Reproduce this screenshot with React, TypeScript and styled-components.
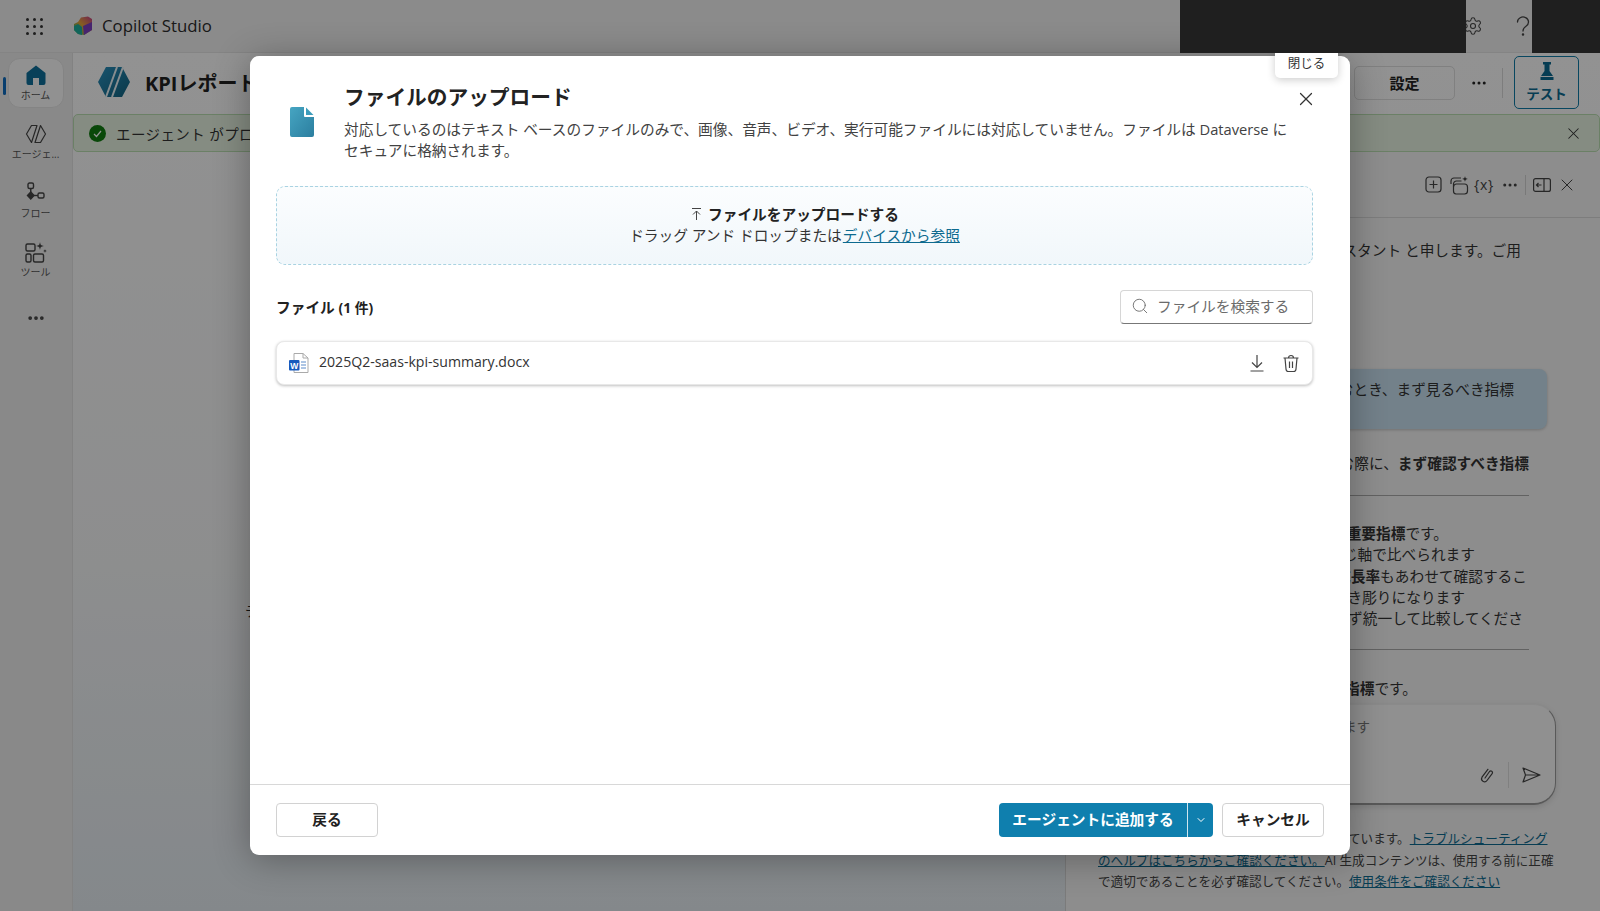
import React from 'react';
import styled, { createGlobalStyle } from 'styled-components';
import { ChevronDown, Search, X, Settings, Ellipsis } from 'lucide-react';

const Global = createGlobalStyle`
  html, body { margin: 0; padding: 0; height: 100%; overflow: hidden; }
  body { font-family: "Open Sans", "Noto Sans CJK JP", sans-serif; color: #242424; background: #fff; }
  * { box-sizing: border-box; }
`;
const Page = styled.div`position: relative; width: 1600px; height: 911px; overflow: hidden; display: flex; flex-direction: column; background: #f3f3f3;`;
const TopBar = styled.header`height: 53px; flex: none; display: flex; align-items: center; padding-left: 26px; background: #f0f0f0; border-bottom: 1px solid #e3e3e3;`;
const Waffle = styled.div`width: 18px; display: grid; grid-template-columns: repeat(3, 3px); gap: 4px; margin-right: 29px;`;
const Dot = styled.span`width: 3px; height: 3px; border-radius: 50%; background: #333;`;
const Brand = styled.span`font-size: 16.8px; margin: 0 0 1px 9px; color: #2b2b2b;`;
const TopIcons = styled.div`margin-left: auto; display: flex; align-items: center; gap: 33px; padding-right: 70px; color: #444;`;
const Redaction = styled.div<{ $left: number; $width: number }>`position: absolute; z-index: 30; top: 0; height: 53px; left: ${p => p.$left}px; width: ${p => p.$width}px; background: #1f1f1f;`;
const Body = styled.div`flex: 1; display: flex; min-height: 0;`;
const Rail = styled.nav`width: 73px; flex: none; display: flex; flex-direction: column; align-items: center; padding: 5px 1px 0 0; background: #ececec; border-right: 1px solid #e0e0e0; position: relative;`;
const RailIndicator = styled.span`position: absolute; left: 3px; top: 24px; width: 3px; height: 18px; border-radius: 2px; background: #0f6cbd;`;
const RailItem = styled.div<{ $active?: boolean }>`width: 56px; height: 50px; display: flex; flex-direction: column; align-items: center; justify-content: center; gap: 1px; font-size: 10px; color: #555; border-radius: 12px; margin-bottom: 9px; ${p => p.$active && 'background: #fafafa; border: 1px solid #e4e4e4;'}`;
const More = styled.div`margin-top: 14px; color: #444;`;
const Main = styled.main`flex: 1; min-width: 0; display: flex; flex-direction: column; background: linear-gradient(180deg, #fbfbfb 0%, #f3f4f5 60%, #e4ebf0 100%);`;
const AgentBar = styled.div`height: 61px; flex: none; display: flex; align-items: center; padding: 0 0 4px 24px;`;
const AgentName = styled.h1`font-size: 20px; font-weight: 700; margin: 2px 0 0 14px; color: #222;`;
const AgentActions = styled.div`margin-left: auto; display: flex; align-items: center; padding-right: 21px; margin-top: 2px;`;
const GhostButton = styled.div`width: 101px; height: 34px; display: flex; align-items: center; justify-content: center; font-size: 15px; font-weight: 700; border: 1px solid #dcdcdc; border-radius: 5px; color: #222; margin-right: 15px;`;
const Divider = styled.span`width: 1px; height: 30px; background: #d8d8d8; margin: 0 11px 0 14px;`;
const TestButton = styled.div`width: 65px; height: 53px; display: flex; flex-direction: column; align-items: center; justify-content: center; gap: 3px; font-size: 13.5px; font-weight: 700; color: #0d6a8f; border: 1.5px solid #0f7ba6; border-radius: 5px; margin-top: -1px;`;
const Banner = styled.div`height: 38px; flex: none; display: flex; align-items: center; padding: 0 16px 0 15px; font-size: 14.5px; letter-spacing: .4px; color: #333; background: #e6f2e1; border: 1px solid #b9dcb0; border-radius: 5px;`;
const BannerCheck = styled.span`width: 17px; height: 17px; flex: none; border-radius: 50%; background: #107c10; display: flex; align-items: center; justify-content: center; margin-right: 10px;`;
const BannerClose = styled.span`margin-left: auto; display: flex; color: #333;`;
const Content = styled.div`flex: 1; min-height: 0; display: flex;`;
const Canvas = styled.div`flex: 1; min-width: 0; display: flex; align-items: center; padding: 156px 0 0 172px; font-size: 14px; color: #222;`;
const TestPanel = styled.aside`width: 535px; flex: none; display: flex; flex-direction: column; border-left: 1px solid #d4d4d4; background: #f3f3f3;`;
const PanelHead = styled.div`height: 66px; flex: none; display: flex; align-items: center; justify-content: flex-end; gap: 5.5px; padding: 0 23px 0 0; border-bottom: 1px solid #d8d8d8; color: #444;`;
const HeadSlot = styled.span`width: 20px; display: flex; align-items: center; justify-content: center; font-size: 14px; letter-spacing: .8px; white-space: nowrap; color: #444;`;
const HeadRule = styled.span`width: 1px; height: 20px; background: #d0d0d0;`;
const Chat = styled.div`flex: 1; min-height: 0; padding: 22px 0 0 32px; font-size: 14.7px; color: #333; display: flex; flex-direction: column;`;
const Line = styled.div<{ $end: number }>`white-space: nowrap; line-height: 21.2px; text-align: right; overflow: visible; padding-right: ${p => p.$end}px;`;
const Bubble = styled.div`width: 449px; height: 60px; flex: none; margin-top: 108px; padding: 8px 33px 0 0; text-align: right; white-space: nowrap; line-height: 24px; background: #c6dfee; border-radius: 8px; box-shadow: 0 1px 3px rgba(0,0,0,.2);`;
const Lead = styled.div`white-space: nowrap; text-align: right; padding-right: 71px; margin-top: 22px; line-height: 24px;`;
const Rule = styled.hr<{ $gap: number; $top: number }>`width: 431px; flex: none; margin: ${p => p.$top}px 0 ${p => p.$gap}px 0; border: 0; border-top: 1px solid #aaa;`;
const InputBox = styled.div`width: 458px; height: 101px; flex: none; margin-top: 5px; background: #f8f8f8; border-radius: 22px; border: 1px solid #eee; border-bottom: 2px solid #999; border-right: 1.5px solid #999; display: flex; flex-direction: column; padding: 12px 185px 0 0; text-align: right; line-height: 20px; font-size: 13.5px; color: #777; box-shadow: 0 2px 6px rgba(0,0,0,.12); position: relative;`;
const InputTools = styled.div`position: absolute; right: 14px; bottom: 15px; display: flex; align-items: center; gap: 12px; color: #444;`;
const ToolRule = styled.span`width: 1px; height: 26px; background: #ddd;`;
const Legal = styled.div`margin-top: 23px; font-size: 12.6px; line-height: 21.3px; color: #444; white-space: nowrap;`;
const LegalLink = styled.a`color: #0d6a8f; text-decoration: underline;`;

const Overlay = styled.div`position: absolute; inset: 0; z-index: 10; display: flex; align-items: center; justify-content: center; background: rgba(0,0,0,.42);`;
const Modal = styled.section`position: relative; width: 1100px; height: 799px; display: flex; flex-direction: column; background: #fff; border-radius: 9px; box-shadow: 0 4px 36px rgba(0,0,0,.32);`;
const Tooltip = styled.div`position: absolute; top: -9px; left: 1025px; width: 63px; height: 31px; padding-top: 6px; text-align: center; font-size: 12.5px; color: #333; background: #fff; border-radius: 5px; box-shadow: 0 2px 8px rgba(0,0,0,.2);`;
const CloseBtn = styled.button`position: absolute; top: 32px; right: 33px; width: 22px; height: 22px; padding: 0; border: 0; background: none; color: #333; display: flex;`;
const ModalBody = styled.div`flex: 1; min-height: 0; display: flex; flex-direction: column; padding: 27px 37px 0 26px;`;
const Head = styled.div`display: flex; align-items: flex-start;`;
const DocIconWrap = styled.div`width: 68px; flex: none; padding: 24px 0 0 14px;`;
const HeadText = styled.div`flex: 1; min-width: 0; padding-right: 24px;`;
const Title = styled.h2`margin: 0; font-size: 20.7px; line-height: 28px; font-weight: 700; color: #222;`;
const Desc = styled.p`margin: 8px 0 0; font-size: 14.7px; line-height: 20.8px; color: #424242;`;
const DropZone = styled.div`height: 79px; flex: none; margin-top: 25px; padding-bottom: 1px; display: flex; flex-direction: column; align-items: center; justify-content: center; font-size: 14.7px; line-height: 21px; color: #333; border: 1px dashed #a9d3e2; border-radius: 9px; background: linear-gradient(180deg, #fbfdfe 0%, #f1f7fb 100%);`;
const UploadLine = styled.div`display: flex; align-items: center; gap: 5px; font-weight: 700; color: #222;`;
const BrowseLink = styled.a`color: #0d6a8f; text-decoration: underline; margin-left: 1px;`;
const ListHead = styled.div`margin-top: 25px; display: flex; align-items: center; justify-content: space-between; height: 34px;`;
const ListTitle = styled.div`font-size: 14.7px; font-weight: 700; color: #222; padding-bottom: 1px;`;
const ListCount = styled.span`font-size: 13.8px;`;
const SearchBox = styled.div`width: 193px; height: 34px; display: flex; align-items: center; gap: 8px; padding: 0 0 2px 10px; font-size: 14.7px; color: #6b6b6b; border: 1px solid #d6d6d6; border-bottom: 1px solid #777; border-radius: 4px;`;
const FileRow = styled.div`margin-top: 17px; height: 44px; display: flex; align-items: center; padding: 0 11px 0 12px; background: #fff; border-radius: 8px; border: 1px solid #e8e8e8; box-shadow: 0 1px 3px rgba(0,0,0,.25);`;
const FileName = styled.span`margin: 0 0 3px 10px; font-size: 14.1px; color: #333;`;
const RowActions = styled.div`margin-left: auto; display: flex; align-items: center; gap: 14px; color: #444;`;
const Footer = styled.footer`height: 71px; flex: none; display: flex; align-items: center; padding: 0 26px; border-top: 1px solid #d8d8d8;`;
const BaseButton = styled.button`height: 34px; padding: 0 0 3px; font-family: inherit; font-size: 14.7px; font-weight: 700; color: #222; background: #fff; border: 1px solid #d2d2d2; border-radius: 4px;`;
const BackButton = styled(BaseButton)`width: 102px;`;
const Split = styled.div`margin-left: auto; display: flex; height: 34px; color: #fff;`;
const Primary = styled.div`width: 188px; padding-bottom: 3px; display: flex; align-items: center; justify-content: center; font-size: 14.7px; font-weight: 700; background: #0f7fae; border-radius: 4px 0 0 4px;`;
const Caret = styled.div`width: 26px; display: flex; align-items: center; justify-content: center; background: #0f7fae; border-left: 1px solid #cfe6ef; border-radius: 0 4px 4px 0;`;
const CancelButton = styled(BaseButton)`width: 102px; margin-left: 9px;`;

const CopilotLogo = () => (
  <svg width="20" height="20" viewBox="0 0 20 20">
    <defs>
      <linearGradient id="cg1" x1="0" y1="1" x2="1" y2="0"><stop offset="0" stopColor="#1fb36b" /><stop offset=".5" stopColor="#e8a33a" /><stop offset="1" stopColor="#c23a8a" /></linearGradient>
    </defs>
    <path d="M8 1.500 15 .5 19 3V14L11 19 5 18 1 14V8L5 6Z" fill="url(#cg1)" />
    <path d="M1 10 5 8 9 11V19L5 18 1 14Z" fill="#1eaf9c" />
    <path d="M10 10 19 6V14L11 19Z" fill="#7a3fc0" />
  </svg>
);
const AgentLogo = () => (
  <svg width="34" height="32" viewBox="0 0 34 32">
    <defs><linearGradient id="ag" x1="0" y1="0" x2="1" y2="1"><stop offset="0" stopColor="#2a90bd" /><stop offset="1" stopColor="#12627f" /></linearGradient></defs>
    <path d="M9 1H25L33 16 25 31H9L1 16Z" fill="url(#ag)" />
    <path d="M20 1 9 31M26 1 15 31" stroke="#e9f3f7" strokeWidth="2" fill="none" />
  </svg>
);
const HomeIcon = () => (
  <svg width="22" height="22" viewBox="0 0 22 22"><path d="M11 1.500 20.500 9V19a2 2 0 0 1-2 2H14V14H8V21H3.500a2 2 0 0 1-2-2V9Z" fill="#0f6f9a" /></svg>
);
const AgentIcon = () => (
  <svg width="22" height="22" viewBox="0 0 22 22" fill="none" stroke="#444" strokeWidth="1.2" strokeLinejoin="round"><path d="M6.500 2.500H12L6.500 19.500 1.500 11Z" /><path d="M15.500 19.500H10L15.500 2.500 20.500 11Z" /></svg>
);
const FlowIcon = () => (
  <svg width="22" height="22" viewBox="0 0 22 22" fill="none" stroke="#444" strokeWidth="1.4"><rect x="3" y="1" width="5.500" height="5.500" rx="1.500" /><path d="M5.750 6.500V10" /><path d="M5.750 10 9 13.500 5.750 17 2.500 13.500Z" fill="#444" /><path d="M9 13.500H13" /><rect x="13" y="11" width="6" height="5" rx="1.500" /></svg>
);
const ToolIcon = () => (
  <svg width="24" height="22" viewBox="0 0 24 22" fill="none" stroke="#444" strokeWidth="1.4"><rect x="2" y="3" width="9" height="7" rx="1.500" /><rect x="2" y="13" width="5" height="8" rx="1.500" /><rect x="9.500" y="13" width="10" height="8" rx="1.500" /><path d="M16 1c.5 3 1 3.500 4 4-3 .5-3.500 1-4 4-.5-3-1-3.500-4-4 3-.5 3.500-1 4-4Z" fill="#444" stroke="none" /><path d="M21 8c.2 1.300.5 1.600 2 2-1.500.3-1.800.6-2 2-.2-1.400-.5-1.700-2-2 1.500-.4 1.800-.7 2-2Z" fill="#444" stroke="none" /></svg>
);
const QuestionIcon = () => (
  <svg width="14" height="20" viewBox="0 0 14 20" fill="none" stroke="#444" strokeWidth="1.300" strokeLinecap="round"><path d="M1.500 6a5.500 5 0 1 1 8.500 4.200C8 11.500 7 12.500 7 15" /><circle cx="7" cy="18.500" r=".6" fill="#444" /></svg>
);
const FlaskIcon = () => (
  <svg width="20" height="18" viewBox="0 0 20 18"><path d="M6 0H14V2.500H12.500V9L16 14H4L7.500 9V2.500H6ZM3.500 15H16.500V18H3.500Z" fill="#0d6a8f" /></svg>
);
const DocIcon = () => (
  <svg width="24" height="30" viewBox="0 0 24 30">
    <defs><linearGradient id="dg" x1="0" y1="0" x2="1" y2="1"><stop offset="0" stopColor="#46a5c2" /><stop offset="1" stopColor="#2b7e9f" /></linearGradient></defs>
    <path d="M2 0H14V9a1 1 0 0 0 1 1H24V28a2 2 0 0 1-2 2H2a2 2 0 0 1-2-2V2a2 2 0 0 1 2-2Z" fill="url(#dg)" />
    <path d="M16 .5 23.500 8H16Z" fill="#3d9cbb" />
  </svg>
);
const WordIcon = () => (
  <svg width="20" height="20" viewBox="0 0 20 20">
    <path d="M5 .5H14L19 5V19.500H5Z" fill="#fff" stroke="#aaa" />
    <path d="M14 .5V5H19" fill="none" stroke="#aaa" />
    <path d="M12 9H17M12 12H17M12 15H17" stroke="#5a8ac9" />
    <rect x="0" y="7" width="10.500" height="10.500" rx="1" fill="#185abd" />
    <text x="5.200" y="15.500" fontSize="8.500" fontWeight="700" fontFamily="Liberation Sans, sans-serif" fill="#fff" textAnchor="middle">W</text>
  </svg>
);
const AddIcon = () => (
  <svg width="17" height="17" viewBox="0 0 17 17" fill="none" stroke="#444" strokeWidth="1.200"><rect x="1" y="1" width="15" height="15" rx="3" /><path d="M8.500 4.500V12.500M4.500 8.500H12.500" /></svg>
);
const MultiIcon = () => (
  <svg width="20" height="20" viewBox="0 0 20 20" fill="none" stroke="#444" strokeWidth="1.200"><path d="M2 9V6a3 3 0 0 1 3-3h7" /><path d="M4.500 12V9a3 3 0 0 1 3-3h5" /><path d="M7 19a3 3 0 0 1-2.500-3V12a3 3 0 0 1 3-3h8a3 3 0 0 1 3 3v4a3 3 0 0 1-3 3Z" /><path d="M16 1c.3 2 .8 2.500 3 3-2.200.4-2.700 1-3 3-.3-2-.8-2.600-3-3 2.200-.5 2.700-1 3-3Z" fill="#444" stroke="none" /></svg>
);
const PanelIcon = () => (
  <svg width="18" height="14" viewBox="0 0 18 14" fill="none" stroke="#444" strokeWidth="1.200"><rect x=".6" y=".6" width="16.800" height="12.800" rx="2" /><path d="M11 .6V13.400" /><path d="M8.500 7H3.500M5.500 5 3.500 7 5.500 9" /></svg>
);
const DownloadIcon = () => (
  <svg width="20" height="20" viewBox="0 0 20 20" fill="none" stroke="#444" strokeWidth="1.200"><path d="M10 2V14M5 9.500 10 14.500 15 9.500M3.500 18H16.500" /></svg>
);
const TrashIcon = () => (
  <svg width="20" height="20" viewBox="0 0 20 20" fill="none" stroke="#444" strokeWidth="1.200"><path d="M2.500 5H17.500M7.500 5a2.500 2.500 0 0 1 5 0" /><path d="M4 5 5 16a2.500 2.500 0 0 0 2.500 2.500h5A2.500 2.500 0 0 0 15 16L16 5" /><path d="M8.500 8.500V15M11.500 8.500V15" /></svg>
);
const UploadIcon = () => (
  <svg width="13" height="14" viewBox="0 0 13 14" fill="none" stroke="#444" strokeWidth="1"><path d="M2 1.500H11M6.500 13V4M3 7.500 6.500 4 10 7.500" /></svg>
);
const ClipIcon = () => (
  <svg width="18" height="18" viewBox="0 0 18 18" fill="none" stroke="#444" strokeWidth="1.200" strokeLinecap="round"><path d="M7 12 11.500 5.500a1.700 1.700 0 0 1 2.800 1.900L9 14.500a3 3 0 0 1-5-3.300L9.500 3.800a3 3 0 0 1 .5-.5" /></svg>
);
const SendIcon = () => (
  <svg width="20" height="18" viewBox="0 0 20 18" fill="none" stroke="#444" strokeWidth="1.200" strokeLinejoin="round"><path d="M2 2 19 9 2 16 4.500 9ZM4.500 9H19" /></svg>
);

export default function App() {
  return (
    <Page>
      <Global />
      <TopBar>
        <Waffle>{Array.from({ length: 9 }).map((_, i) => <Dot key={i} />)}</Waffle>
        <CopilotLogo />
        <Brand>Copilot Studio</Brand>
        <TopIcons><Settings size={20} strokeWidth={1.3} /><QuestionIcon /></TopIcons>
      </TopBar>
      <Redaction $left={1180} $width={286} />
      <Redaction $left={1532} $width={68} />
      <Body>
        <Rail>
          <RailIndicator />
          <RailItem $active><HomeIcon />ホーム</RailItem>
          <RailItem><AgentIcon />エージェ...</RailItem>
          <RailItem><FlowIcon />フロー</RailItem>
          <RailItem><ToolIcon />ツール</RailItem>
          <More><Ellipsis size={20} strokeWidth={2.5} /></More>
        </Rail>
        <Main>
          <AgentBar>
            <AgentLogo />
            <AgentName>KPIレポート アシスタント</AgentName>
            <AgentActions>
              <GhostButton>設定</GhostButton>
              <Ellipsis size={18} />
              <Divider />
              <TestButton><FlaskIcon />テスト</TestButton>
            </AgentActions>
          </AgentBar>
          <Banner>
            <BannerCheck><svg width="9" height="9" viewBox="0 0 9 9" fill="none" stroke="#fff" strokeWidth="1.2"><path d="M1 5 3.500 7.500 8 2" /></svg></BannerCheck>
            エージェント がプロビジョニング
            <BannerClose><X size={19} strokeWidth={1.3} /></BannerClose>
          </Banner>
          <Content>
            <Canvas>テスト</Canvas>
            <TestPanel>
              <PanelHead>
                <HeadSlot><AddIcon /></HeadSlot>
                <HeadSlot><MultiIcon /></HeadSlot>
                <HeadSlot>{'{x}'}</HeadSlot>
                <HeadSlot><Ellipsis size={18} /></HeadSlot>
                <HeadRule />
                <HeadSlot><PanelIcon /></HeadSlot>
                <HeadSlot><X size={20} strokeWidth={1.2} /></HeadSlot>
              </PanelHead>
              <Chat>
                <Line $end={79}>こんにちは。私は KPI レポート アシスタント と申します。ご用</Line>
                <Bubble>KPI レポートを読むとき、まず見るべき指標</Bubble>
                <Lead>KPI レポートを読む際に、<strong>まず確認すべき指標</strong></Lead>
                <Rule $top={20} $gap={27} />
                <Line $end={152}>売上は<strong>最重要指標</strong>です。</Line>
                <Line $end={125}>同じ軸で比べられます</Line>
                <Line $end={73}><strong>成長率</strong>もあわせて確認するこ</Line>
                <Line $end={135}>課題が浮き彫りになります</Line>
                <Line $end={77}>期間は必ず統一して比較してくださ</Line>
                <Rule $top={20} $gap={28} />
                <Line $end={183}>優先の<strong>指標</strong>です。</Line>
                <InputBox>
                  メッセージを入力します
                  <InputTools><ClipIcon /><ToolRule /><SendIcon /></InputTools>
                </InputBox>
                <Legal>
                  この会話の応答はAIを利用して自動作成されています。<LegalLink>トラブルシューティング</LegalLink><br />
                  <LegalLink>のヘルプはこちらからご確認ください。</LegalLink>AI 生成コンテンツは、使用する前に正確<br />
                  で適切であることを必ず確認してください。<LegalLink>使用条件をご確認ください</LegalLink>
                </Legal>
              </Chat>
            </TestPanel>
          </Content>
        </Main>
      </Body>
      <Overlay>
        <Modal>
          <Tooltip>閉じる</Tooltip>
          <CloseBtn aria-label="閉じる"><X size={22} strokeWidth={1.3} /></CloseBtn>
          <ModalBody>
            <Head>
              <DocIconWrap><DocIcon /></DocIconWrap>
              <HeadText>
                <Title>ファイルのアップロード</Title>
                <Desc>対応しているのはテキスト ベースのファイルのみで、画像、音声、ビデオ、実行可能ファイルには対応していません。ファイルは Dataverse にセキュアに格納されます。</Desc>
              </HeadText>
            </Head>
            <DropZone>
              <UploadLine><UploadIcon />ファイルをアップロードする</UploadLine>
              <div>ドラッグ アンド ドロップまたは<BrowseLink>デバイスから参照</BrowseLink></div>
            </DropZone>
            <ListHead>
              <ListTitle>ファイル <ListCount>(1 件)</ListCount></ListTitle>
              <SearchBox><Search size={18} strokeWidth={1.2} />ファイルを検索する</SearchBox>
            </ListHead>
            <FileRow>
              <WordIcon />
              <FileName>2025Q2-saas-kpi-summary.docx</FileName>
              <RowActions><DownloadIcon /><TrashIcon /></RowActions>
            </FileRow>
          </ModalBody>
          <Footer>
            <BackButton>戻る</BackButton>
            <Split>
              <Primary>エージェントに追加する</Primary>
              <Caret><ChevronDown size={12} /></Caret>
            </Split>
            <CancelButton>キャンセル</CancelButton>
          </Footer>
        </Modal>
      </Overlay>
    </Page>
  );
}
